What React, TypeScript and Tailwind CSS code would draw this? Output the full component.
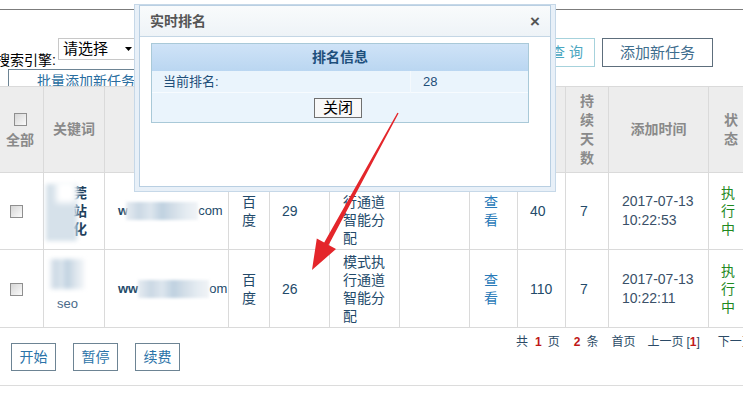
import React from 'react';

const font = "font-['Liberation_Sans','Noto_Sans_CJK_SC',sans-serif]";
const smear =
  'bg-[linear-gradient(90deg,#e6ecf2_0%,#cbd8e4_18%,#dde6ee_34%,#bfd1e0_50%,#d3dee8_66%,#e5ecf2_84%,#f0f3f6_100%)]';

function Check() {
  return (
    <span className="inline-block w-[13px] h-[13px] border border-[#8f8f8f] bg-[linear-gradient(135deg,#d6d6d6,#fbfbfb)] align-middle" />
  );
}

function Arrow() {
  return (
    <svg className="absolute inset-0 pointer-events-none" width="743" height="411" viewBox="0 0 743 411">
      <polygon
        points="398.6,113.3 397.4,112.7 324.2,242.5 316.8,238.4 312,270 336,249 328.6,244.9"
        fill="#e4262b"
      />
    </svg>
  );
}

function Modal() {
  return (
    <div className="absolute left-[134px] top-[4px] w-[422px] h-[188px] bg-[#e8f0f8] border border-[#c6d8e8] px-[4px] pb-[4px]">
      <div className="h-full bg-white border border-[#b9cfe2] flex flex-col">
        <div className="h-[31px] shrink-0 flex items-center justify-between pl-[10px] pr-[10px] bg-[linear-gradient(#f9fbfc,#eef3f7)] border-b border-[#c4d6e5]">
          <span className="text-[14px] font-bold text-[#555]">实时排名</span>
          <span className="text-[17px] font-bold text-[#555] leading-none">×</span>
        </div>
        <div className="pt-[6px] pl-[11px]">
          <div className="w-[378px] border border-[#a9c9d8] bg-[#eaf4fc]">
            <div className="h-[27px] flex items-center justify-center bg-[linear-gradient(#cfe3f7,#bad6f1)] text-[14px] font-bold text-[#1d4f7c]">
              排名信息
            </div>
            <div className="h-[22px] flex items-center text-[13px] text-[#1e4e78] border-b border-[#f7fbfe]">
              <span className="w-[259px] pl-[11px] border-r border-[#f4f9fd] leading-[22px]">当前排名:</span>
              <span className="pl-[12px]">28</span>
            </div>
            <div className="h-[29px] flex items-center justify-center pr-[4px]">
              <span className="w-[48px] h-[20px] border border-[#707070] bg-[#f8f8f8] text-[15px] leading-[18px] text-black text-center">
                关闭
              </span>
            </div>
          </div>
        </div>
      </div>
    </div>
  );
}

const head = 'border border-[#dadada] bg-[#ededed] text-[14px] font-bold text-[#8a8a8a] text-center leading-[19px]';
const cell = 'border border-[#dadada] text-[14px] leading-[18px] text-left pl-[12px]';

type Row = { rank: string; price: string; time: string; first: boolean };

const rows: Row[] = [
  { rank: '29', price: '40', time: '10:22:53', first: true },
  { rank: '26', price: '110', time: '10:22:11', first: false },
];

function Keyword({ first }: { first: boolean }) {
  if (first) {
    return (
      <td className="border border-[#dadada] relative p-0">
        <div className="pl-[29px] text-[14px] leading-[18px] font-bold text-[#1f3f5c]">
          莞<br />站<br />化
        </div>
        <div className="absolute left-[2px] top-[11px] w-[31px] h-[57px] bg-[#d6e1ea] blur-[2px]" />
        <div className="absolute left-[12px] top-[8px] w-[20px] h-[22px] bg-white blur-[3px]" />
      </td>
    );
  }
  return (
    <td className="border border-[#dadada] relative p-0">
      <div className="pl-[13px] pt-[30px] text-[13px] text-[#4a6a8a]">seo</div>
      <div className={`absolute left-[6px] top-[9px] w-[34px] h-[30px] ${smear} blur-[2px]`} />
    </td>
  );
}

function Url({ first }: { first: boolean }) {
  return (
    <td className="border border-[#dadada] pl-[13px]">
      <div className="flex items-center text-[13px] text-[#234a6a]">
        <span className="font-bold">{first ? 'w' : 'ww'}</span>
        <span className={`inline-block ${first ? 'w-[72px] ml-[-2px]' : 'w-[71px]'} h-[18px] ${smear} blur-[1.5px]`} />
        <span>{first ? 'com' : 'om'}</span>
      </div>
    </td>
  );
}

function Pager() {
  return (
    <div className="flex items-start text-[12px] leading-[16px] text-[#2b4a66] whitespace-nowrap ml-[336px] pt-[6px]">
      <span>共</span>
      <span className="ml-[7px] font-bold text-[#c01818]">1</span>
      <span className="ml-[6px]">页</span>
      <span className="ml-[14px] font-bold text-[#c01818]">2</span>
      <span className="ml-[6px]">条</span>
      <span className="ml-[13px]">首页</span>
      <span className="ml-[12px]">上一页</span>
      <span className="ml-[3px]">[<b className="text-[#c01818]">1</b>]</span>
      <span className="ml-[18px]">下一页</span>
    </div>
  );
}

export default function App() {
  return (
    <div className={`relative w-[743px] h-[411px] overflow-hidden bg-white text-[#234a6a] ${font}`}>
      <div className="mt-[9px] h-px bg-[#7c7c7c]" />

      {/* search bar */}
      <div className="flex items-start mt-[28px] h-[31px] pr-[30px]">
        <span className="ml-[-4px] mt-[13px] text-[14px] leading-[18px] text-black">搜索引擎:</span>
        <div className="ml-[2px] w-[80px] h-[22px] border border-[#c8c8c8] flex items-center justify-between pl-[4px] pr-[5px] text-[15px] text-black">
          <span>请选择</span>
          <svg width="7" height="4" viewBox="0 0 7 4">
            <polygon points="0,0 7,0 3.5,4" fill="#000" />
          </svg>
        </div>
        <div className="ml-auto flex gap-[7px]">
          <span className="w-[56px] h-[29px] border border-[#a6d2dc] text-[14px] leading-[27px] text-center text-[#4aa6c0]">
            查 询
          </span>
          <span className="w-[111px] h-[29px] border border-[#5d6e7c] text-[15px] leading-[27px] text-center text-[#3f6e8e]">
            添加新任务
          </span>
        </div>
      </div>
      <div className="h-[17px] overflow-hidden pl-[8px]">
        <div className="w-[156px] h-[30px] border border-[#6d8494] text-[14px] leading-[20px] pt-[1px] text-center text-[#2a6ea0]">
          批量添加新任务
        </div>
      </div>

      {/* task table */}
      <table className="table-fixed border-collapse w-[758px] ml-[-1px]">
        <colgroup>
          <col className="w-[44px]" />
          <col className="w-[61px]" />
          <col className="w-[124px]" />
          <col className="w-[41px]" />
          <col className="w-[60px]" />
          <col className="w-[70px]" />
          <col className="w-[70px]" />
          <col className="w-[48px]" />
          <col className="w-[48px]" />
          <col className="w-[43px]" />
          <col className="w-[100px]" />
          <col className="w-[49px]" />
        </colgroup>
        <thead>
          <tr className="h-[86px]">
            <th className={`${head} pr-[3px]`}>
              <Check />
              <div className="mt-[3px]">全部</div>
            </th>
            <th className={head}>关键词</th>
            <th className={head}>网址</th>
            <th className={head}>搜<br />索<br />引<br />擎</th>
            <th className={head}>初始<br />排名</th>
            <th className={head}>执行<br />模式</th>
            <th className={head}>当前<br />排名</th>
            <th className={head}>排<br />名</th>
            <th className={head}>单价</th>
            <th className={head}>持<br />续<br />天<br />数</th>
            <th className={head}>添加时间</th>
            <th className={`${head} pr-[4px]`}>状<br />态</th>
          </tr>
        </thead>
        <tbody>
          {rows.map((r) => (
            <tr key={r.rank} className={r.first ? 'h-[77px]' : 'h-[78px]'}>
              <td className="border border-[#dadada] pl-[10px]">
                <Check />
              </td>
              <Keyword first={r.first} />
              <Url first={r.first} />
              <td className={`${cell} pl-[13px]`}>百<br />度</td>
              <td className={cell}>{r.rank}</td>
              <td className={`${cell} pl-[13px]`}>模式执<br />行通道<br />智能分<br />配</td>
              <td className={cell}></td>
              <td className={`${cell} pl-[14px] text-[#2a7ab8]`}>查<br />看</td>
              <td className={`${cell} pl-[11px]`}>{r.price}</td>
              <td className={`${cell} pl-[14px]`}>7</td>
              <td className={`${cell} pl-[13px] text-[13px] leading-[19px] text-[#3a5068]`}>
                2017-07-13<br />{r.time}
              </td>
              <td className={`${cell} text-[13px] leading-[17px] text-[#1f8a1f]`}>执<br />行<br />中</td>
            </tr>
          ))}
        </tbody>
      </table>

      {/* actions + pager */}
      <div className="flex items-start">
        <div className="flex gap-[17px] pl-[11px] pt-[15px]">
          {['开始', '暂停', '续费'].map((t) => (
            <span
              key={t}
              className="w-[45px] h-[28px] border border-[#6d8494] text-[14px] leading-[26px] text-center text-[#2b73a8]"
            >
              {t}
            </span>
          ))}
        </div>
        <Pager />
      </div>
      <div className="mt-[14px] h-px bg-[#dcdcdc]" />

      <Modal />
      <Arrow />
    </div>
  );
}
